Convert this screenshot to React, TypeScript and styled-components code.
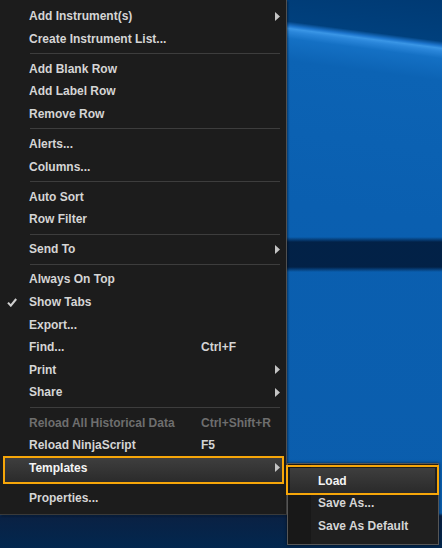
import React from "react"
import styled, { createGlobalStyle, css } from "styled-components"

const GlobalStyle = createGlobalStyle`
  html, body {
    margin: 0;
    padding: 0;
    background: #0b5eae;
  }
  body {
    font-family: "Liberation Sans", Arial, sans-serif;
  }
`

const Desktop = styled.div`
  position: relative;
  width: 442px;
  height: 548px;
  overflow: hidden;
  display: flex;
  align-items: flex-start;
  background:
    linear-gradient(to bottom, transparent 513px, #0a2143 516px, #02274f 548px),
    linear-gradient(to bottom, transparent 237px, rgba(0, 20, 48, 0.82) 242px, rgba(0, 20, 48, 0.82) 267px, transparent 272px),
    linear-gradient(187.4deg, #003a74 0px, #00407d 41px, #1c74cc 45.5px, #3a96e6 48px, #2a86da 51px, #1470c4 58px, #0c63b4 80px, #0a5fb0 220px, #0b5dac 100%);
`

const Menu = styled.div`
  width: 286px;
  padding: 4.75px 0 4.5px;
  background: #1c1c1c;
  border-right: 1px solid #505050;
  border-bottom: 1px solid #3a3a3a;
  box-shadow: 1px 1px 2px rgba(0, 0, 0, 0.45);
`

const itemText = css<{ $active?: boolean; $disabled?: boolean }>`
  font-size: 12px;
  font-weight: bold;
  white-space: nowrap;
  color: ${(p) => (p.$disabled ? "#6e6e6e" : p.$active ? "#f4f4f4" : "#d5d5d5")};
`

const MenuItem = styled.div<{ $active?: boolean; $disabled?: boolean }>`
  position: relative;
  display: flex;
  align-items: center;
  height: 22.6px;
  margin: 0 3px;
  ${itemText}

  & > * {
    position: relative;
    z-index: 1;
  }

  ${(p) =>
    p.$active &&
    css`
      &::before {
        content: "";
        position: absolute;
        top: 2px;
        bottom: -3px;
        left: 2px;
        right: 1px;
        background: linear-gradient(#3e3e3e, #2b2b2b);
      }
      &::after {
        content: "";
        position: absolute;
        top: 0;
        bottom: -5px;
        left: 0;
        right: -1px;
        border: 2px solid #f6a609;
      }
    `}
`

const CheckCell = styled.span`
  display: flex;
  align-items: center;
  width: 22px;
  padding-left: 4px;
  flex: none;
`

const Label = styled.span`
  width: 172px;
  flex: none;
`

const Shortcut = styled.span``

const ArrowIcon = styled.svg`
  margin-left: auto;
  margin-right: 3px;
  flex: none;
`

const Separator = styled.div`
  height: 7.5px;
  display: flex;
  align-items: center;
  margin: 0 6px 0 30px;

  &::before {
    content: "";
    flex: 1;
    height: 1px;
    background: #3d3d3d;
  }
`

const SubMenu = styled.div`
  position: absolute;
  left: 287px;
  top: 463px;
  width: 150px;
  padding: 5.25px 0 7px;
  background: linear-gradient(to right, #181818 0 23px, #1f1f1f 23px);
  border: 1px solid #565656;
  box-shadow: 0 0 3px rgba(0, 0, 0, 0.6);
`

const SubItem = styled.div<{ $active?: boolean }>`
  position: relative;
  display: flex;
  align-items: center;
  height: 22.5px;
  padding-left: 30px;
  ${itemText}

  & > * {
    position: relative;
    z-index: 1;
  }

  ${(p) =>
    p.$active &&
    css`
      &::before {
        content: "";
        position: absolute;
        top: -1.25px;
        bottom: -1.25px;
        left: 2px;
        right: 3px;
        background: linear-gradient(#3e3e3e, #2a2a2a);
      }
      &::after {
        content: "";
        position: absolute;
        top: -4.25px;
        bottom: -2.75px;
        left: -2px;
        right: -1px;
        border: 2px solid #f6a609;
      }
    `}
`

type Entry =
  | { sep: true }
  | {
      sep?: false
      label: string
      shortcut?: string
      submenu?: boolean
      checked?: boolean
      disabled?: boolean
      active?: boolean
    }

const entries: Entry[] = [
  { label: "Add Instrument(s)", submenu: true },
  { label: "Create Instrument List..." },
  { sep: true },
  { label: "Add Blank Row" },
  { label: "Add Label Row" },
  { label: "Remove Row" },
  { sep: true },
  { label: "Alerts..." },
  { label: "Columns..." },
  { sep: true },
  { label: "Auto Sort" },
  { label: "Row Filter" },
  { sep: true },
  { label: "Send To", submenu: true },
  { sep: true },
  { label: "Always On Top" },
  { label: "Show Tabs", checked: true },
  { label: "Export..." },
  { label: "Find...", shortcut: "Ctrl+F" },
  { label: "Print", submenu: true },
  { label: "Share", submenu: true },
  { sep: true },
  { label: "Reload All Historical Data", shortcut: "Ctrl+Shift+R", disabled: true },
  { label: "Reload NinjaScript", shortcut: "F5" },
  { label: "Templates", submenu: true, active: true },
  { sep: true },
  { label: "Properties..." },
]

const templateItems = [
  { label: "Load", active: true },
  { label: "Save As..." },
  { label: "Save As Default" },
]

function Arrow() {
  return (
    <ArrowIcon width="5" height="9" viewBox="0 0 5 9">
      <path d="M0 0 L5 4.5 L0 9 Z" fill="#c4c4c4" />
    </ArrowIcon>
  )
}

function Check() {
  return (
    <svg width="10" height="9" viewBox="0 0 10 9">
      <path d="M1 4.6 L3.8 7.6 L9.2 1" fill="none" stroke="#cfcfcf" strokeWidth="2.1" />
    </svg>
  )
}

export default function App() {
  return (
    <>
      <GlobalStyle />
      <Desktop>
        <Menu>
          {entries.map((e, i) =>
            e.sep ? (
              <Separator key={i} />
            ) : (
              <MenuItem key={i} $active={e.active} $disabled={e.disabled}>
                <CheckCell>{e.checked && <Check />}</CheckCell>
                <Label>{e.label}</Label>
                {e.shortcut && <Shortcut>{e.shortcut}</Shortcut>}
                {e.submenu && <Arrow />}
              </MenuItem>
            )
          )}
        </Menu>
        <SubMenu>
          {templateItems.map((t) => (
            <SubItem key={t.label} $active={t.active}>
              <span>{t.label}</span>
            </SubItem>
          ))}
        </SubMenu>
      </Desktop>
    </>
  )
}
